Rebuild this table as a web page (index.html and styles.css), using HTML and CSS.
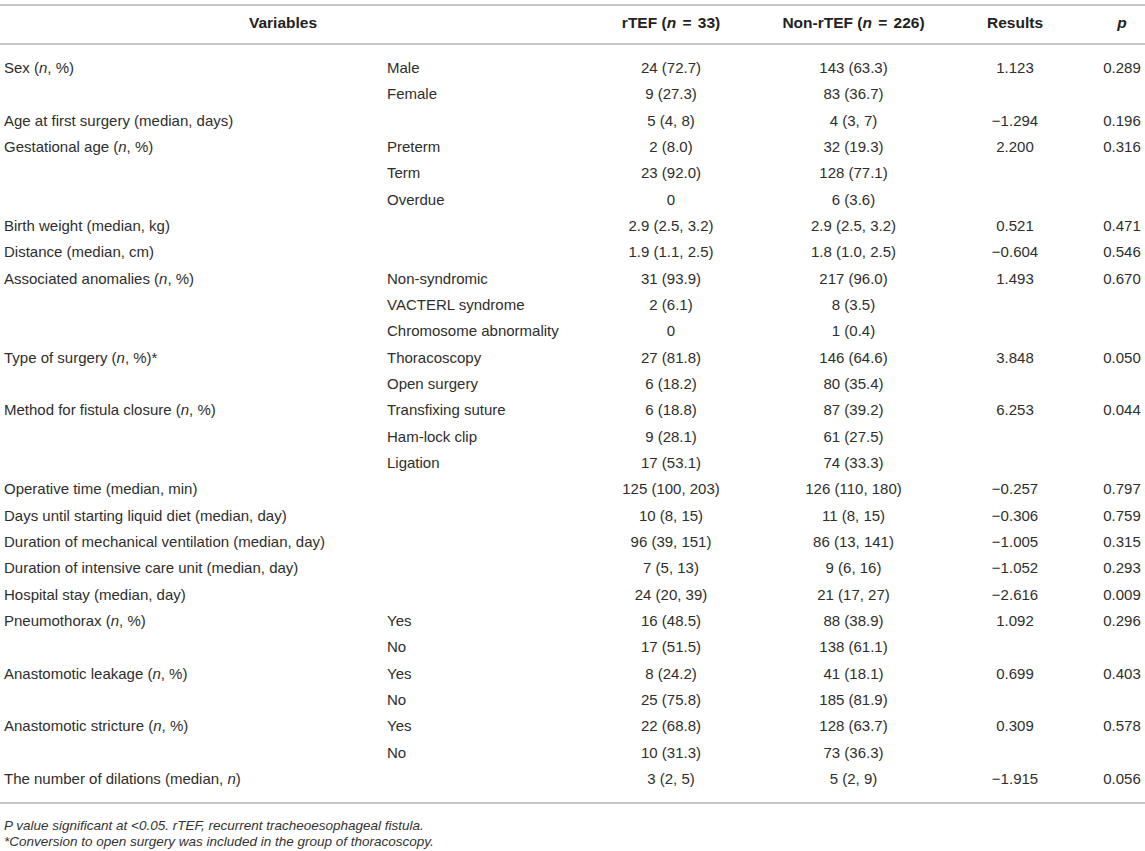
FILE: index.html
```html
<!DOCTYPE html>
<html>
<head>
<meta charset="utf-8">
<link rel="stylesheet" href="styles.css">
</head>
<body>
<div class="wrap">
<table class="data">
<colgroup>
<col class="c1"><col class="c2"><col class="c3"><col class="c4"><col class="c5"><col class="c6">
</colgroup>
<thead>
<tr>
<th colspan="2">Variables</th>
<th>rTEF (<i>n</i> <span class="eq">=</span> 33)</th>
<th>Non-rTEF (<i>n</i> <span class="eq">=</span> 226)</th>
<th>Results</th>
<th><i>p</i></th>
</tr>
</thead>
<tbody>
<tr class="first"><td>Sex (<i>n</i>, %)</td><td>Male</td><td>24 (72.7)</td><td>143 (63.3)</td><td>1.123</td><td>0.289</td></tr>
<tr><td></td><td>Female</td><td>9 (27.3)</td><td>83 (36.7)</td><td></td><td></td></tr>
<tr><td>Age at first surgery (median, days)</td><td></td><td>5 (4, 8)</td><td>4 (3, 7)</td><td>−1.294</td><td>0.196</td></tr>
<tr><td>Gestational age (<i>n</i>, %)</td><td>Preterm</td><td>2 (8.0)</td><td>32 (19.3)</td><td>2.200</td><td>0.316</td></tr>
<tr><td></td><td>Term</td><td>23 (92.0)</td><td>128 (77.1)</td><td></td><td></td></tr>
<tr><td></td><td>Overdue</td><td>0</td><td>6 (3.6)</td><td></td><td></td></tr>
<tr><td>Birth weight (median, kg)</td><td></td><td>2.9 (2.5, 3.2)</td><td>2.9 (2.5, 3.2)</td><td>0.521</td><td>0.471</td></tr>
<tr><td>Distance (median, cm)</td><td></td><td>1.9 (1.1, 2.5)</td><td>1.8 (1.0, 2.5)</td><td>−0.604</td><td>0.546</td></tr>
<tr><td>Associated anomalies (<i>n</i>, %)</td><td>Non-syndromic</td><td>31 (93.9)</td><td>217 (96.0)</td><td>1.493</td><td>0.670</td></tr>
<tr><td></td><td>VACTERL syndrome</td><td>2 (6.1)</td><td>8 (3.5)</td><td></td><td></td></tr>
<tr><td></td><td>Chromosome abnormality</td><td>0</td><td>1 (0.4)</td><td></td><td></td></tr>
<tr><td>Type of surgery (<i>n</i>, %)*</td><td>Thoracoscopy</td><td>27 (81.8)</td><td>146 (64.6)</td><td>3.848</td><td>0.050</td></tr>
<tr><td></td><td>Open surgery</td><td>6 (18.2)</td><td>80 (35.4)</td><td></td><td></td></tr>
<tr><td>Method for fistula closure (<i>n</i>, %)</td><td>Transfixing suture</td><td>6 (18.8)</td><td>87 (39.2)</td><td>6.253</td><td>0.044</td></tr>
<tr><td></td><td>Ham-lock clip</td><td>9 (28.1)</td><td>61 (27.5)</td><td></td><td></td></tr>
<tr><td></td><td>Ligation</td><td>17 (53.1)</td><td>74 (33.3)</td><td></td><td></td></tr>
<tr><td>Operative time (median, min)</td><td></td><td>125 (100, 203)</td><td>126 (110, 180)</td><td>−0.257</td><td>0.797</td></tr>
<tr><td>Days until starting liquid diet (median, day)</td><td></td><td>10 (8, 15)</td><td>11 (8, 15)</td><td>−0.306</td><td>0.759</td></tr>
<tr><td>Duration of mechanical ventilation (median, day)</td><td></td><td>96 (39, 151)</td><td>86 (13, 141)</td><td>−1.005</td><td>0.315</td></tr>
<tr><td>Duration of intensive care unit (median, day)</td><td></td><td>7 (5, 13)</td><td>9 (6, 16)</td><td>−1.052</td><td>0.293</td></tr>
<tr><td>Hospital stay (median, day)</td><td></td><td>24 (20, 39)</td><td>21 (17, 27)</td><td>−2.616</td><td>0.009</td></tr>
<tr><td>Pneumothorax (<i>n</i>, %)</td><td>Yes</td><td>16 (48.5)</td><td>88 (38.9)</td><td>1.092</td><td>0.296</td></tr>
<tr><td></td><td>No</td><td>17 (51.5)</td><td>138 (61.1)</td><td></td><td></td></tr>
<tr><td>Anastomotic leakage (<i>n</i>, %)</td><td>Yes</td><td>8 (24.2)</td><td>41 (18.1)</td><td>0.699</td><td>0.403</td></tr>
<tr><td></td><td>No</td><td>25 (75.8)</td><td>185 (81.9)</td><td></td><td></td></tr>
<tr><td>Anastomotic stricture (<i>n</i>, %)</td><td>Yes</td><td>22 (68.8)</td><td>128 (63.7)</td><td>0.309</td><td>0.578</td></tr>
<tr><td></td><td>No</td><td>10 (31.3)</td><td>73 (36.3)</td><td></td><td></td></tr>
<tr class="last"><td>The number of dilations (median, <i>n</i>)</td><td></td><td>3 (2, 5)</td><td>5 (2, 9)</td><td>−1.915</td><td>0.056</td></tr>
</tbody>
</table>
<div class="notes">
<p><i>P value significant at &lt;0.05. rTEF, recurrent tracheoesophageal fistula.</i></p>
<p><i>*Conversion to open surgery was included in the group of thoracoscopy.</i></p>
</div>
</div>
</body>
</html>
```
FILE: styles.css
```css
html, body {
  margin: 0;
  padding: 0;
  background: #ffffff;
}
.wrap {
  padding-top: 4px;
  font-family: "Liberation Sans", Arial, Helvetica, sans-serif;
  color: #2e2e2e;
}
.data {
  width: 1145px;
  table-layout: fixed;
  border-collapse: collapse;
  font-size: 15px;
}
.c1 { width: 383px; }
.c2 { width: 183px; }
.c3 { width: 210px; }
.c4 { width: 155px; }
.c5 { width: 168px; }
.c6 { width: 46px; }
.data thead th {
  border-top: 2px solid #c6c6c6;
  border-bottom: 2px solid #c6c6c6;
  height: 34px;
  padding: 0 0 3px 0;
  font-size: 15.5px;
  font-weight: bold;
  text-align: center;
  color: #222;
}
.eq {
  padding: 0 2px;
}
.data td {
  padding: 0;
  line-height: 26.33px;
  text-align: center;
  white-space: nowrap;
}
.data td:nth-child(1),
.data td:nth-child(2) {
  text-align: left;
  padding-left: 4px;
}
.data tr.first td {
  padding-top: 10px;
}
.data tr.last td {
  padding-bottom: 10px;
  border-bottom: 2px solid #c6c6c6;
}
.notes {
  padding: 14px 0 0 4px;
  font-size: 13.5px;
  color: #333;
}
.notes p {
  margin: 0;
  line-height: 16px;
}
```
